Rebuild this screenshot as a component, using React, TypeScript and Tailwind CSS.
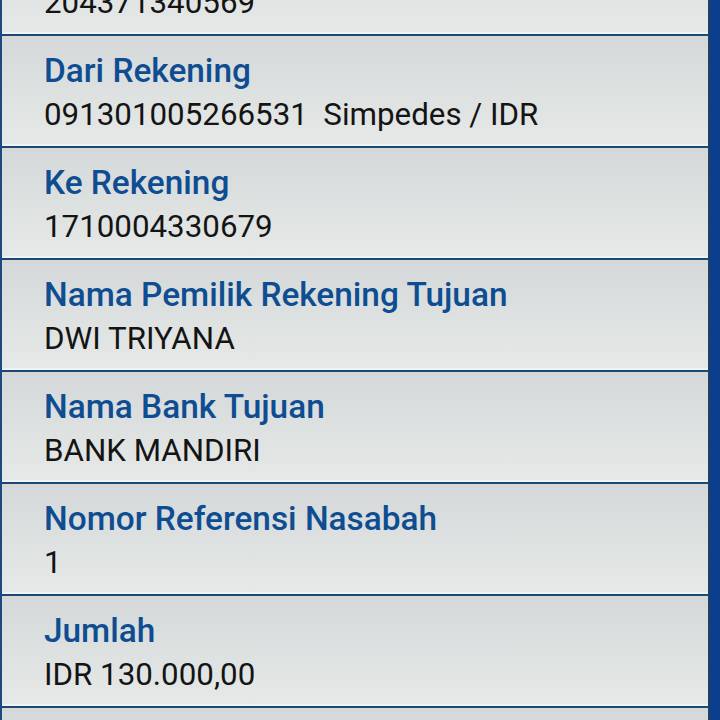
const rows = [
  { label: "Nomor Transaksi", value: "204371340569" },
  { label: "Dari Rekening", value: "091301005266531\u00a0\u00a0Simpedes / IDR" },
  { label: "Ke Rekening", value: "1710004330679" },
  { label: "Nama Pemilik Rekening Tujuan", value: "DWI TRIYANA" },
  { label: "Nama Bank Tujuan", value: "BANK MANDIRI" },
  { label: "Nomor Referensi Nasabah", value: "1" },
  { label: "Jumlah", value: "IDR 130.000,00" },
  { label: "Biaya", value: "IDR 6.500,00" },
]

function DetailRow({ label, value }: { label: string; value: string }) {
  return (
    <div className="h-[112px] shrink-0 border-b-2 border-[#1d4a74] bg-linear-to-b from-[#d4d8d8] to-[#e6e9e8] shadow-[inset_0_-2px_0_#eef2f1] pl-[42px] pt-[13px]">
      <div className="text-[33.4px] leading-[44px] font-medium text-[#0e4d91]">{label}</div>
      <div className="text-[31.3px] leading-[44px] text-[#141414]">{value}</div>
    </div>
  )
}

export default function App() {
  return (
    <div
      className="w-[720px] h-[720px] overflow-hidden flex bg-[#0b3f8e]"
      style={{ fontFamily: "Roboto, 'Liberation Sans', sans-serif" }}
    >
      <div className="w-[710px] flex flex-col -mt-[76px] border-l-2 border-[#1b4a80] border-r-2 border-r-[#24405e]">
        {rows.map((r) => (
          <DetailRow key={r.label} label={r.label} value={r.value} />
        ))}
      </div>
      <div className="flex-1 bg-[#0b3f8e]" />
    </div>
  )
}
